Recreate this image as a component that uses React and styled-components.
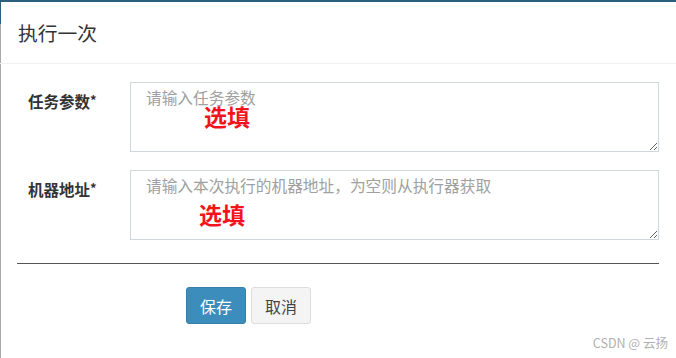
import styled, { createGlobalStyle } from "styled-components";

const GlobalStyle = createGlobalStyle`
  html, body {
    margin: 0;
    padding: 0;
    background: #fff;
  }
  body {
    font-family: "Noto Sans CJK SC", "Liberation Sans", sans-serif;
    color: #333;
  }
`;

const fields = [
  { label: "任务参数", placeholder: "请输入任务参数", noteX: 74, noteY: 23 },
  { label: "机器地址", placeholder: "请输入本次执行的机器地址，为空则从执行器获取", noteX: 69, noteY: 33 },
];

function App() {
  return (
    <Page>
      <GlobalStyle />
      <Header>
        <Title>执行一次</Title>
      </Header>
      <Body>
        <Form>
          {fields.map((f) => (
            <Row key={f.label}>
              <Label>
                {f.label}
                <Star>*</Star>
              </Label>
              <Field>
                <TextArea placeholder={f.placeholder} />
                <Note $x={f.noteX} $y={f.noteY}>选填</Note>
              </Field>
            </Row>
          ))}
        </Form>
        <Divider />
        <Actions>
          <Button $primary>保存</Button>
          <Button>取消</Button>
        </Actions>
      </Body>
      <Watermark>CSDN @ 云扬</Watermark>
    </Page>
  );
}
export default App;

const Page = styled.div`
  position: relative;
  width: 676px;
  height: 358px;
  box-sizing: border-box;
  border-top: 2px solid #2a5f80;
  background:
    linear-gradient(#2a5f80, #2a5f80) 0 0 / 1px 22px no-repeat,
    linear-gradient(#a9a9a9, #a9a9a9) 0 0 / 1px 100% no-repeat,
    #fff;
  overflow: hidden;
`;

const Header = styled.div`
  display: flex;
  align-items: center;
  height: 61px;
  padding-left: 18px;
  border-bottom: 1px solid #efefef;
`;

const Title = styled.h4`
  margin: 0;
  font-size: 19.8px;
  font-weight: normal;
  color: #333;
  line-height: 1;
`;

const Body = styled.div`
  padding: 18px 17px 0 17px;
`;

const Form = styled.div`
  display: flex;
  flex-direction: column;
  gap: 18px;
`;

const Row = styled.div`
  display: flex;
  align-items: flex-start;
`;

const Label = styled.label`
  width: 113px;
  box-sizing: border-box;
  padding: 8px 0 0 11px;
  font-size: 15.5px;
  line-height: 20px;
  font-weight: bold;
  color: #333;
`;

const Star = styled.span`
  font-size: 13px;
  vertical-align: 3px;
`;

const Field = styled.div`
  position: relative;
  flex: 1;
`;

const TextArea = styled.textarea`
  display: block;
  width: 100%;
  height: 70px;
  box-sizing: border-box;
  margin: 0;
  padding: 5px 15px;
  border: 1px solid #d2d6de;
  border-radius: 0;
  font-family: "Noto Sans CJK SC", "Liberation Sans", sans-serif;
  font-size: 15.7px;
  line-height: 20px;
  color: #555;
  outline: none;
  &::placeholder {
    color: #a0a0a0;
  }
`;

const Note = styled.span`
  position: absolute;
  left: ${(p) => p.$x}px;
  top: ${(p) => p.$y}px;
  font-size: 23px;
  line-height: 23px;
  font-weight: bold;
  color: #f2141c;
  pointer-events: none;
`;

const Divider = styled.hr`
  margin: 23px 0 0 0;
  border: none;
  border-top: 1px solid #555;
  height: 0;
`;

const Actions = styled.div`
  display: flex;
  gap: 5px;
  margin-top: 23px;
  padding-left: 169px;
`;

const Button = styled.button`
  width: 60px;
  height: 37px;
  box-sizing: border-box;
  border-radius: 3px;
  border: 1px solid ${(p) => (p.$primary ? "#367fa9" : "#ddd")};
  background: ${(p) => (p.$primary ? "#3c8dbc" : "#f4f4f4")};
  color: ${(p) => (p.$primary ? "#fff" : "#444")};
  font-family: "Noto Sans CJK SC", "Liberation Sans", sans-serif;
  font-size: 16px;
  padding: 0;
  cursor: pointer;
`;

const Watermark = styled.div`
  position: absolute;
  right: 8px;
  bottom: 6px;
  font-size: 12.5px;
  color: #b0b0b0;
`;
